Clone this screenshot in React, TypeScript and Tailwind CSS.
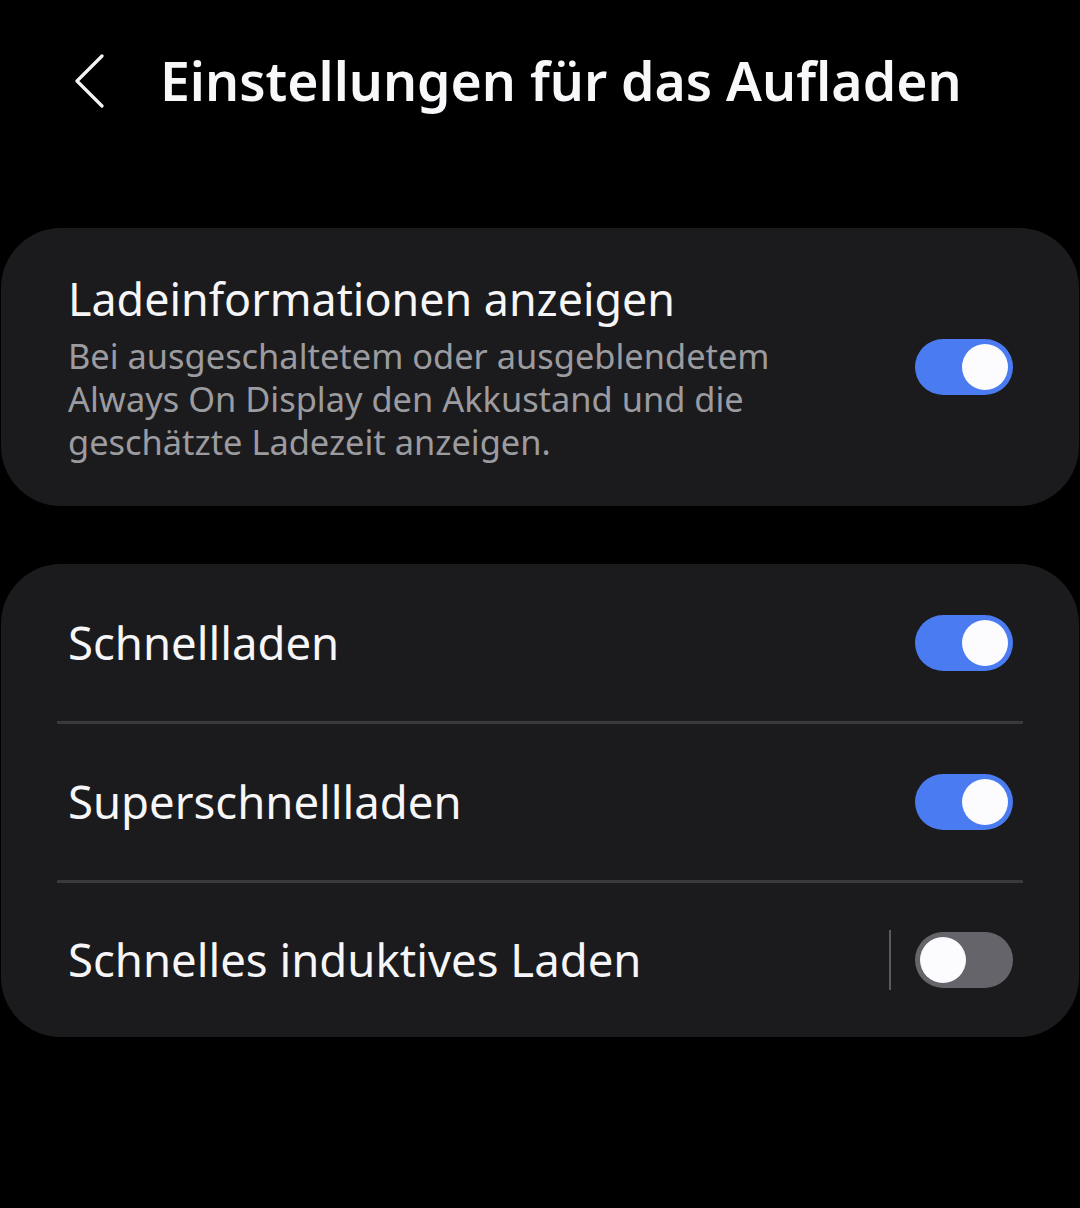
import React from "react";

interface ToggleProps {
  on: boolean;
}

function Toggle({ on }: ToggleProps) {
  return (
    <div
      className={
        on
          ? "flex h-[56px] w-[98px] shrink-0 items-center justify-end rounded-full bg-[#4a7bf0] px-[5px]"
          : "flex h-[56px] w-[98px] shrink-0 items-center justify-start rounded-full bg-[#65646a] px-[5px]"
      }
    >
      <div className="h-[46px] w-[46px] rounded-full bg-[#fcfcff]" />
    </div>
  );
}

function Row({ label, on, h, split }: { label: string; on: boolean; h: string; split?: boolean }) {
  return (
    <div className={`flex items-center justify-between pl-[67px] pr-[66px] ${h}`}>
      <span className="text-[45.5px] leading-none text-[#f6f6f8]">{label}</span>
      <div className="flex items-center">
        {split && <div className="mr-[24px] h-[60px] w-[2px] bg-[#5a5a5e]" />}
        <Toggle on={on} />
      </div>
    </div>
  );
}

export default function App() {
  return (
    <div
      className="min-h-[1208px] w-[1080px] bg-black px-[1px]"
      style={{ fontFamily: '"Noto Sans", "Open Sans", sans-serif' }}
    >
      {/* header */}
      <div className="flex h-[228px] items-start pt-[43px]">
        <div className="flex h-[76px] w-[159px] items-center pl-[73px]">
          <svg width="32" height="54" viewBox="0 0 32 54" fill="none">
            <polyline
              points="28,2 3,27 28,52"
              stroke="#f4f4f6"
              strokeWidth="3.2"
              strokeLinecap="round"
              strokeLinejoin="round"
            />
          </svg>
        </div>
        <h1 className="text-[53.5px] font-semibold leading-[76px] text-[#f8f8fa]">
          Einstellungen für das Aufladen
        </h1>
      </div>

      {/* Ladeinformationen */}
      <div className="flex h-[278px] items-center justify-between rounded-[60px] bg-[#1b1b1d] pl-[67px] pr-[66px]">
        <div className="flex flex-col">
          <span className="text-[44.8px] leading-[56px] text-[#f6f6f8]">Ladeinformationen anzeigen</span>
          <p className="mt-[7px] w-[760px] text-[34.4px] leading-[43px] text-[#9c9ca0]">
            Bei ausgeschaltetem oder ausgeblendetem Always On Display den Akkustand und die
            geschätzte Ladezeit anzeigen.
          </p>
        </div>
        <Toggle on={true} />
      </div>

      {/* Ladeoptionen */}
      <div className="mt-[58px] rounded-[60px] bg-[#1b1b1d]">
        <Row label="Schnellladen" on={true} h="h-[157px]" />
        <div className="mx-[56px] h-[3px] bg-[#3a3a3c]" />
        <Row label="Superschnellladen" on={true} h="h-[156px]" />
        <div className="mx-[56px] h-[3px] bg-[#3a3a3c]" />
        <Row label="Schnelles induktives Laden" on={false} h="h-[154px]" split />
      </div>
    </div>
  );
}
